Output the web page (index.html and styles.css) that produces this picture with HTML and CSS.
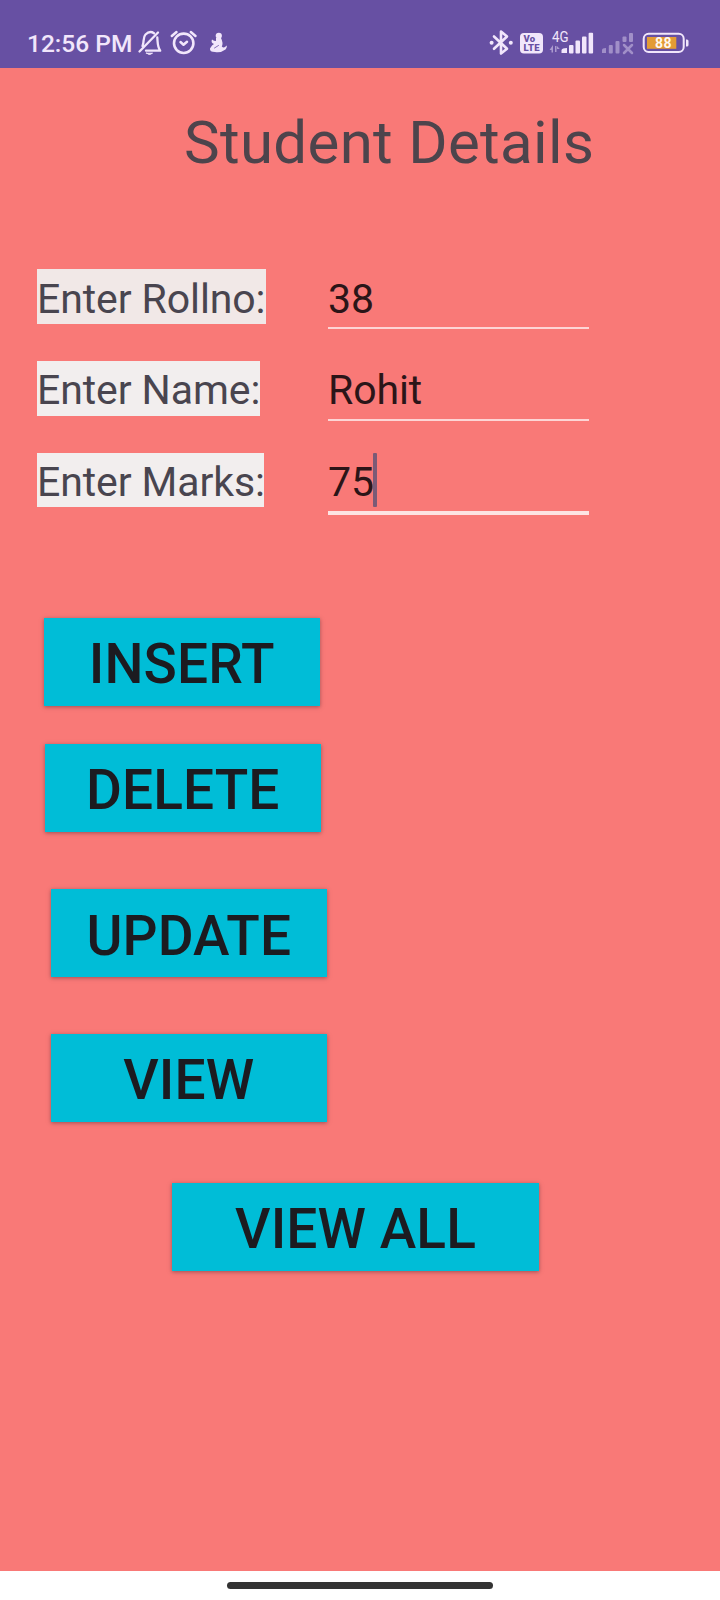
FILE: index.html
```html
<!DOCTYPE html>
<html lang="en">
<head>
<meta charset="utf-8">
<title>Student Details</title>
<link rel="stylesheet" href="styles.css">
</head>
<body>
<div class="screen">
  <header class="status">
    <span class="time">12:56 PM</span>
    <svg class="icons-left" width="92" height="32" viewBox="136 26 92 32" fill="none" stroke="#f1e6fb" stroke-width="2.300" stroke-linecap="round" stroke-linejoin="round">
      <path d="M139.500 51.500L158 32.500M142.500 46C144.500 42 142.500 37.500 145.500 34.500C148 32 151.500 31.500 154 33.200M157.300 37.500C157.800 43 157.300 46.500 160.200 50.700H146"/>
      <path d="M146.500 53.200H152.500Q149.500 56 146.500 53.200Z" fill="#f1e6fb" stroke-width="1"/>
      <circle cx="183.700" cy="43.300" r="9.700" stroke-width="2.600"/>
      <path d="M180.500 42L183.500 44.700L187 41.700M171.800 36L176.500 32M190.800 32L195.500 36" stroke-width="2.500"/>
      <g fill="#f1e6fb" stroke="none">
        <circle cx="218.800" cy="35.800" r="3.100"/>
        <path d="M216 38L221 38Q223.500 43 221.800 46.500Q224 49 226.500 45.500Q227.500 46.500 225.500 49.500Q221 53 215 52Q209.500 52 210 48.500Q212 44.500 214 44Q210.500 42.500 212 39.500Q214 41 216 41Z"/>
      </g>
      <path d="M214.500 48L218.500 45.500" stroke="#6750a3" stroke-width=".8"/>
    </svg>
    <svg class="icons-right" width="208" height="34" viewBox="484 26 208 34" fill="#f1e6fb">
      <path d="M494 36.500L507 48.800L501 53.500V31.500L507 36.500L494 48.800" fill="none" stroke="#f1e6fb" stroke-width="2.600" stroke-linejoin="round" stroke-linecap="round"/>
      <circle cx="491.600" cy="42.700" r="2"/><circle cx="510.800" cy="42.700" r="2"/>
      <rect x="520" y="33" width="23" height="20.500" rx="4"/>
      <text class="volte" x="523.500" y="42" textLength="11.500">Vo</text>
      <text class="volte" x="523.500" y="51" textLength="16">LTE</text>
      <text class="network" x="552" y="41.500" textLength="16.500" lengthAdjust="spacingAndGlyphs">4G</text>
      <path d="M549.500 50L553 45V52.500H551.500V50ZM555 46H556.500V52H555ZM557 46L559.800 49H557Z" opacity=".5"/>
      <path d="M561.500 53V50Q562 48 567 48V53Z"/>
      <rect x="569" y="45" width="4.500" height="8.500" rx="1"/><rect x="575.500" y="40.500" width="4.500" height="13" rx="1"/><rect x="582" y="36.500" width="4.500" height="17" rx="1"/><rect x="588.600" y="32.800" width="4.500" height="20.700" rx="1"/>
      <g opacity=".42">
        <path d="M602 53V50Q602 48 606 48V53Z"/>
        <rect x="608.800" y="45" width="4" height="8.500" rx="1"/><rect x="615.500" y="41" width="4" height="12.500" rx="1"/><rect x="622.500" y="36.500" width="4" height="5.500" rx="1"/><rect x="629" y="33" width="4" height="9" rx="1"/>
        <path d="M624 45L632 53M632 45L624 53" stroke="#f1e6fb" stroke-width="2.500" stroke-linecap="round"/>
      </g>
      <rect x="643.700" y="33.700" width="40" height="18.300" rx="5" fill="none" stroke="#f1e6fb" stroke-width="2"/>
      <rect x="647" y="37" width="29.300" height="11.800" fill="#e39b35"/>
      <path d="M686 39.500H687Q688.500 39.500 688.500 41V45Q688.500 46.500 687 46.500H686Z"/>
      <text class="battery" x="655" y="48" textLength="16.500">88</text>
    </svg>
  </header>
  <main class="content">
    <h1 class="title">Student Details</h1>
    <div class="form">
      <div class="row"><span class="label label-roll">Enter Rollno:</span><div class="field">38</div></div>
      <div class="row"><span class="label label-name">Enter Name:</span><div class="field">Rohit</div></div>
      <div class="row"><span class="label label-marks">Enter Marks:</span><div class="field focused">75<i class="caret"></i></div></div>
    </div>
    <div class="actions">
      <button class="btn insert">INSERT</button>
      <button class="btn delete">DELETE</button>
      <button class="btn update">UPDATE</button>
      <button class="btn view">VIEW</button>
      <button class="btn all">VIEW ALL</button>
    </div>
  </main>
  <footer class="navbar"><div class="pill"></div></footer>
</div>
</body>
</html>
```

FILE: styles.css
```css
* { box-sizing: border-box; }
body { margin: 0; font-family: Roboto, sans-serif; }
.screen { width: 720px; height: 1600px; display: flex; flex-direction: column; background: #f97977; overflow: hidden; }
.status { height: 68px; flex: none; display: flex; align-items: flex-start; background: #6750a3; color: #f1e6fb; padding-left: 27px; }
.time { width: 109px; margin-top: 29px; font-size: 24.5px; line-height: 30px; font-weight: 500; white-space: nowrap; }
.icons-left { margin-top: 26px; }
.icons-right { margin: 26px 28px 0 auto; }
.volte { font: 900 9.5px Roboto, sans-serif; fill: #6750a3; }
.network { font: 400 14px Roboto, sans-serif; }
.battery { font: 700 14px Roboto, sans-serif; fill: #fff8ee; }
.content { flex: 1; display: flex; flex-direction: column; }
.title { margin: 40px 0 0 184px; height: 70px; font-size: 60px; line-height: 70px; font-weight: 400; letter-spacing: .33px; color: #4d444c; white-space: nowrap; }
.form { display: flex; flex-direction: column; gap: 37px; margin: 91px 0 0 37px; }
.row { display: flex; align-items: flex-start; height: 55px; }
.label { height: 55px; padding-top: 3px; background: #f2eeee; color: #49454f; font-size: 41px; line-height: 52px; letter-spacing: -.1px; white-space: nowrap; }
.label-roll { width: 229px; margin-right: 62px; padding-top: 4px; background: #f1e8e7; }
.label-name { width: 223px; margin-right: 68px; }
.label-marks { width: 227px; height: 54px; margin-right: 64px; }
.field { width: 261px; height: 60px; padding-top: 3px; border-bottom: 2px solid #fdd5d5; color: #2b1518; font-size: 41px; line-height: 52px; letter-spacing: -.1px; display: flex; }
.label-roll + .field { padding-top: 4px; }
.focused { height: 62px; border-bottom: 4px solid #fde4e3; }
.caret { width: 4px; height: 54px; margin: -3px 0 0 -1px; background: #7b5a76; border-radius: 1px; }
.actions { display: flex; flex-direction: column; align-items: flex-start; margin-top: 110px; }
.btn { width: 275.5px; height: 88px; margin: 0; padding: 4px 0 0; border: 0; background: #00bdd7; color: #1c1b20; font: 500 55px/84px Roboto, sans-serif; letter-spacing: .1px; box-shadow: 0 1px 4px rgba(70, 40, 50, .5); white-space: nowrap; }
.insert { margin-left: 44px; }
.delete { margin: 38px 0 0 45px; }
.update { margin: 57px 0 0 51px; padding-top: 5px; }
.view { margin: 57px 0 0 51px; }
.all { width: 367px; margin: 61px 0 0 172px; }
.navbar { height: 29px; flex: none; background: #fff; padding-top: 11px; }
.pill { width: 266px; height: 7px; margin-left: 227px; border-radius: 4px; background: #333; }
```
